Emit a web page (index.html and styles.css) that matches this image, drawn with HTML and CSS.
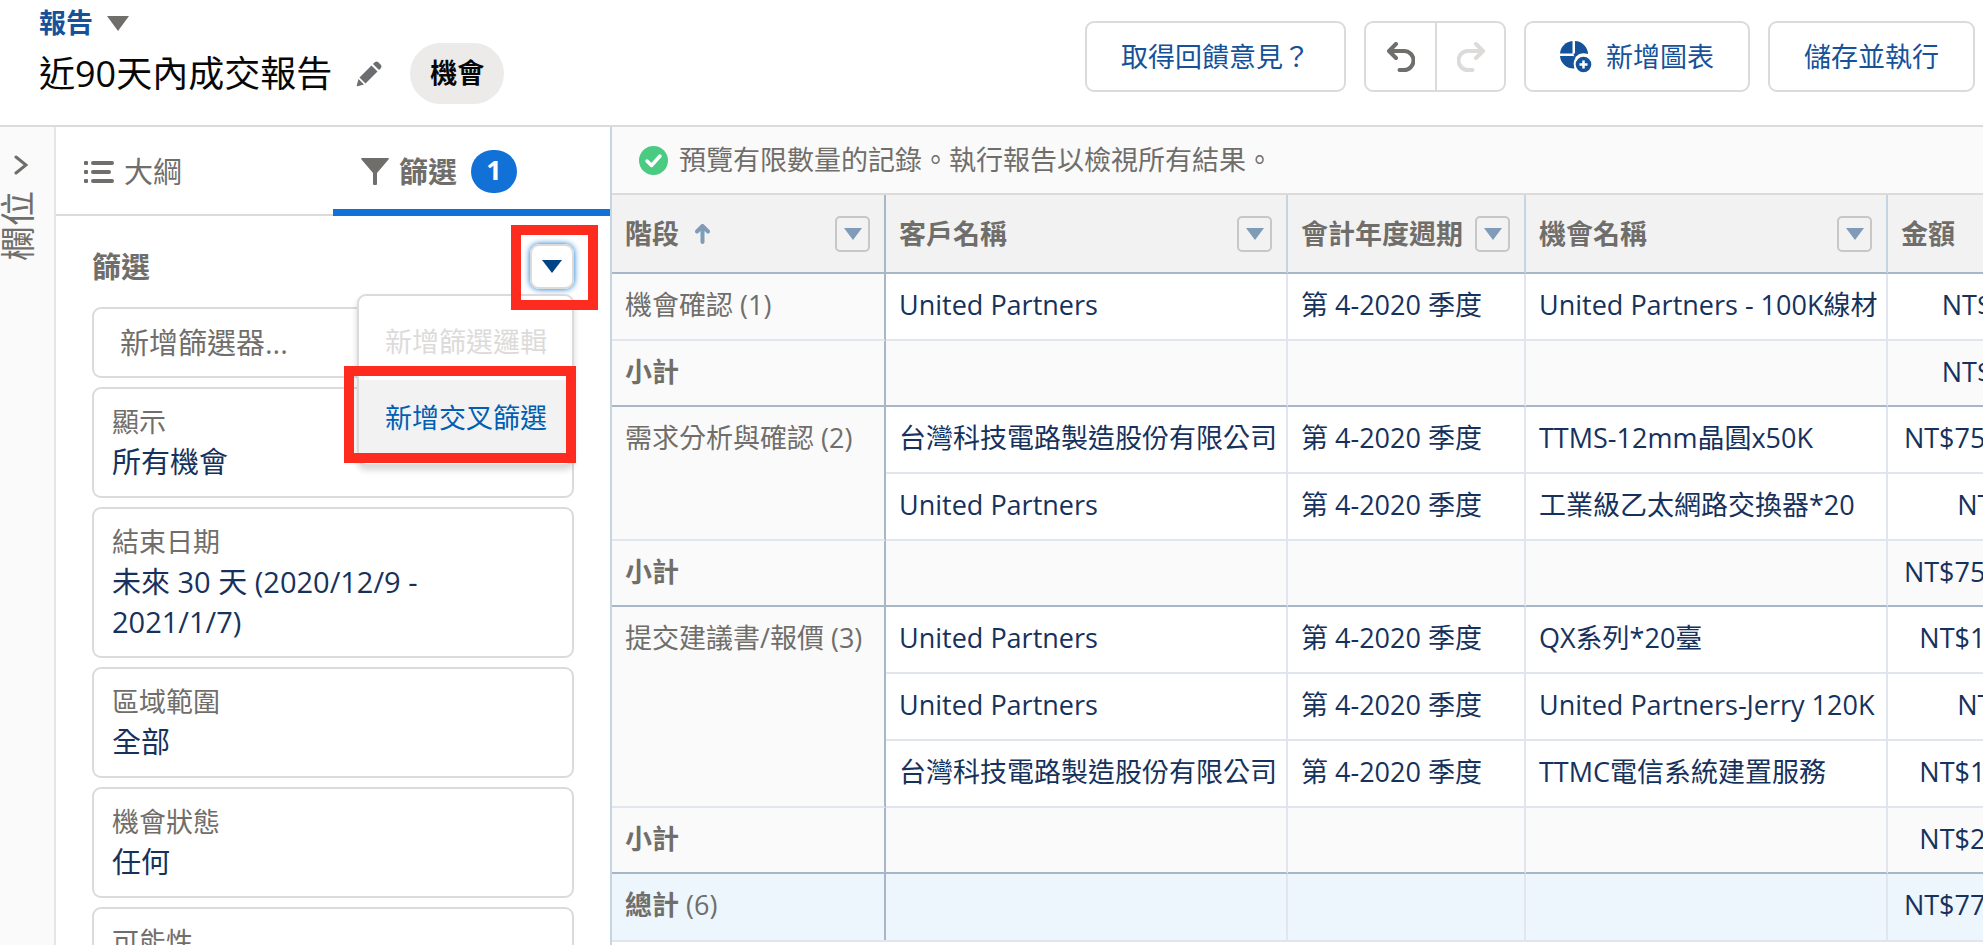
FILE: index.html
```html
<!DOCTYPE html>
<html lang="zh-Hant">

<head>
    <meta charset="UTF-8">
    <meta name="viewport" content="width=device-width, initial-scale=1.0">
    <title>近90天內成交報告</title>
    <link rel="stylesheet" href="styles.css">
</head>

<body>
    <header>
        <div class="heading">
            <a href="#" class="crumb">報告
                <svg width="22" height="15" viewBox="0 0 22 15"><path d="M0 0h22L11 15z" fill="#706e6b"/></svg>
            </a>
            <div class="title-row">
                <h1>近90天內成交報告</h1>
                <button class="edit-btn" aria-label="編輯">
                    <svg width="26" height="26" viewBox="0 0 26 26" fill="#6b6d70">
                        <path d="M3.500 16.500L15.500 4.500L21.500 10.500L9.500 22.500z"/>
                        <path d="M17 3L19 1Q20.500 0 22 1L25 4Q26 5.500 25 7L23 9z"/>
                        <path d="M2.500 18L8 23.500L1.500 25.200Q.5 25.400.8 24.300z"/>
                    </svg>
                </button>
                <span class="pill">機會</span>
            </div>
        </div>
        <div class="actions">
            <button class="btn">取得回饋意見？</button>
            <div class="btn-group">
                <button aria-label="復原">
                    <svg width="28" height="30" viewBox="0 0 28 30" fill="none" stroke="#706e6b" stroke-width="4" stroke-linecap="round" stroke-linejoin="round">
                        <path d="M9 2L2 9l7 7M2.500 9H17a9 9 0 0 1 0 19H12.500"/>
                    </svg>
                </button>
                <button aria-label="重做" disabled>
                    <svg width="28" height="30" viewBox="0 0 28 30" fill="none" stroke="#dddbda" stroke-width="4" stroke-linecap="round" stroke-linejoin="round">
                        <path d="M19 2l7 7-7 7M25.500 9H11a9 9 0 0 0 0 19h4.500"/>
                    </svg>
                </button>
            </div>
            <button class="btn">
                <svg width="32" height="32" viewBox="0 0 32 32" fill="#16529a">
                    <path d="M12.500 0V12.500H0A13.500 13.500 0 0 1 12.500 0z"/>
                    <path d="M15 0A13.500 13.500 0 0 1 28 13Q20 11 16.500 15H15z" />
                    <path d="M0 15H13.500L15.500 17Q12.500 21 14.500 27.500A13.500 13.500 0 0 1 0 15z"/>
                    <path d="M13.500 12.500h5l-4 5z"/>
                    <circle cx="23.500" cy="23.500" r="9.500" fill="#fff"/>
                    <circle cx="23.500" cy="23.500" r="7.800"/>
                    <path d="M23.500 19.500v8M19.500 23.500h8" stroke="#fff" stroke-width="2.500"/>
                </svg>
                新增圖表
            </button>
            <button class="btn">儲存並執行</button>
        </div>
    </header>

    <div class="workspace">
        <aside class="rail">
            <button aria-label="展開欄位">
                <svg width="14" height="20" viewBox="0 0 14 20" fill="none" stroke="#706e6b" stroke-width="3" stroke-linecap="round"><path d="M2 2l10 8L2 18"/></svg>
            </button>
            <span class="rail-label">欄位</span>
        </aside>

        <section class="panel">
            <nav class="tabs">
                <button class="tab">
                    <svg width="30" height="22" viewBox="0 0 30 22" fill="#706e6b">
                        <rect width="4" height="4" rx="1"/><rect y="9" width="4" height="4" rx="1"/><rect y="18" width="4" height="4" rx="1"/>
                        <rect x="7" width="23" height="4" rx="2"/><rect x="7" y="9" width="20" height="4" rx="2"/><rect x="7" y="18" width="23" height="4" rx="2"/>
                    </svg>
                    大綱
                </button>
                <button class="tab active">
                    <svg width="28" height="27" viewBox="0 0 28 27" fill="#706e6b"><path d="M1 0h26q1.500 0 .5 1.500L16 15v11q0 1-1 1h-2q-1 0-1-1V15L.5 1.500Q-.5 0 1 0z"/></svg>
                    篩選
                    <span class="badge">1</span>
                </button>
            </nav>

            <div class="filters">
                <div class="filters-head">
                    <h2>篩選</h2>
                    <div class="menu-anchor">
                        <button class="menu-btn" aria-label="篩選動作">
                            <svg width="20" height="13" viewBox="0 0 20 13"><path d="M0 0h20L10 13z" fill="#014486"/></svg>
                        </button>
                        <div class="menu">
                            <button disabled>新增篩選邏輯</button>
                            <button class="hovered">新增交叉篩選</button>
                        </div>
                        <div class="mark mark-button"></div>
                        <div class="mark mark-item"></div>
                    </div>
                </div>
                <input type="text" placeholder="新增篩選器..." aria-label="新增篩選器">
                <button class="card"><span>顯示</span><strong>所有機會</strong></button>
                <button class="card"><span>結束日期</span><strong>未來 30 天 (2020/12/9 - 2021/1/7)</strong></button>
                <button class="card"><span>區域範圍</span><strong>全部</strong></button>
                <button class="card"><span>機會狀態</span><strong>任何</strong></button>
                <button class="card"><span>可能性</span></button>
            </div>
        </section>

        <main>
            <div class="notice">
                <svg width="29" height="29" viewBox="0 0 29 29"><circle cx="14.500" cy="14.500" r="14.500" fill="#4bca81"/><path d="M8 15l4.500 4.500L21 10" fill="none" stroke="#fff" stroke-width="3.500" stroke-linecap="round" stroke-linejoin="round"/></svg>
                預覽有限數量的記錄。執行報告以檢視所有結果。
            </div>
            <table>
                <colgroup>
                    <col class="c-stage"><col class="c-account"><col class="c-period"><col class="c-name"><col class="c-amount">
                </colgroup>
                <thead>
                    <tr>
                        <th><div class="th">階段
                            <svg class="sort" width="15" height="20" viewBox="0 0 15 20" fill="none" stroke="#7f9bb8" stroke-width="4" stroke-linecap="round" stroke-linejoin="round"><path d="M7.500 18V2M2 7.500L7.500 2L13 7.500"/></svg>
                            <button aria-label="階段選單"><svg width="18" height="12" viewBox="0 0 18 12"><path d="M0 0h18L9 12z"/></svg></button></div></th>
                        <th><div class="th">客戶名稱<button aria-label="客戶名稱選單"><svg width="18" height="12" viewBox="0 0 18 12"><path d="M0 0h18L9 12z"/></svg></button></div></th>
                        <th><div class="th">會計年度週期<button aria-label="會計年度週期選單"><svg width="18" height="12" viewBox="0 0 18 12"><path d="M0 0h18L9 12z"/></svg></button></div></th>
                        <th><div class="th">機會名稱<button aria-label="機會名稱選單"><svg width="18" height="12" viewBox="0 0 18 12"><path d="M0 0h18L9 12z"/></svg></button></div></th>
                        <th><div class="th">金額</div></th>
                    </tr>
                </thead>
                <tbody>
                    <tr>
                        <td class="group">機會確認 (1)</td>
                        <td>United Partners</td>
                        <td>第 4-2020 季度</td>
                        <td>United Partners - 100K線材</td>
                        <td>NT$100,000</td>
                    </tr>
                    <tr class="subtotal"><td class="group"><b>小計</b></td><td></td><td></td><td></td><td>NT$100,000</td></tr>
                    <tr>
                        <td class="group" rowspan="2">需求分析與確認 (2)</td>
                        <td>台灣科技電路製造股份有限公司</td>
                        <td>第 4-2020 季度</td>
                        <td>TTMS-12mm晶圓x50K</td>
                        <td>NT$75,000,000</td>
                    </tr>
                    <tr>
                        <td>United Partners</td>
                        <td>第 4-2020 季度</td>
                        <td>工業級乙太網路交換器*20</td>
                        <td>NT$60,000</td>
                    </tr>
                    <tr class="subtotal"><td class="group"><b>小計</b></td><td></td><td></td><td></td><td>NT$75,060,000</td></tr>
                    <tr>
                        <td class="group" rowspan="3">提交建議書/報價 (3)</td>
                        <td>United Partners</td>
                        <td>第 4-2020 季度</td>
                        <td>QX系列*20臺</td>
                        <td>NT$1,000,000</td>
                    </tr>
                    <tr>
                        <td>United Partners</td>
                        <td>第 4-2020 季度</td>
                        <td>United Partners-Jerry 120K</td>
                        <td>NT$12,000</td>
                    </tr>
                    <tr>
                        <td>台灣科技電路製造股份有限公司</td>
                        <td>第 4-2020 季度</td>
                        <td>TTMC電信系統建置服務</td>
                        <td>NT$1,000,000</td>
                    </tr>
                    <tr class="subtotal"><td class="group"><b>小計</b></td><td></td><td></td><td></td><td>NT$2,012,000</td></tr>
                    <tr class="total"><td class="group"><b>總計</b> (6)</td><td></td><td></td><td></td><td>NT$77,172,000</td></tr>
                </tbody>
            </table>
        </main>
    </div>
</body>

</html>
```

FILE: styles.css
```css
* {
    box-sizing: border-box;
}

body {
    margin: 0;
    height: 100vh;
    display: flex;
    flex-direction: column;
    overflow: hidden;
    background-color: #fff;
    color: #16325c;
    font-family: "Open Sans", "Noto Sans CJK TC", sans-serif;
    font-size: 27px;
    line-height: 40px;
}

button,
input {
    font: inherit;
    color: inherit;
    background: none;
    border: none;
    margin: 0;
    padding: 0;
}

svg {
    display: block;
    flex: none;
}

h1,
h2 {
    margin: 0;
}

/* header */
header {
    flex: none;
    height: 127px;
    padding: 0 8px 0 39px;
    display: flex;
    justify-content: space-between;
    align-items: flex-start;
    border-bottom: 2px solid #dddbda;
}

.crumb {
    display: flex;
    align-items: center;
    gap: 14px;
    margin-top: 3px;
    color: #16529a;
    font-weight: bold;
    text-decoration: none;
}

.title-row {
    display: flex;
    align-items: center;
}

h1 {
    color: #080707;
    font-size: 36px;
    font-weight: normal;
}

.edit-btn {
    margin: 0 28px 0 24px;
}

.pill {
    height: 61px;
    padding: 10px 20px;
    border-radius: 31px;
    background-color: #ecebea;
    color: #080707;
    font-weight: bold;
}

.actions {
    display: flex;
    gap: 18px;
    margin-top: 21px;
}

.btn {
    display: flex;
    align-items: center;
    gap: 14px;
    height: 71px;
    padding: 0 34px;
    border: 2px solid #dddbda;
    border-radius: 9px;
    color: #16529a;
    white-space: nowrap;
}

.btn-group {
    display: flex;
    height: 71px;
    border: 2px solid #dddbda;
    border-radius: 9px;
}

.btn-group button {
    width: 69px;
    display: flex;
    align-items: center;
    justify-content: center;
}

.btn-group button + button {
    border-left: 2px solid #dddbda;
}

.workspace {
    flex: 1;
    min-height: 0;
    display: flex;
}

/* collapsed fields rail */
.rail {
    flex: none;
    width: 56px;
    padding-top: 28px;
    background-color: #fafafa;
    border-right: 2px solid #e5e5e5;
}

.rail button {
    display: block;
    margin: 0 0 16px 14px;
}

.rail-label {
    display: block;
    writing-mode: vertical-rl;
    text-orientation: sideways;
    transform: rotate(180deg);
    width: 36px;
    line-height: 36px;
    font-size: 35px;
    color: #706e6b;
}

/* filter panel */
.panel {
    flex: none;
    width: 554px;
    overflow: hidden;
    color: #706e6b;
    font-size: 29px;
}

.tabs {
    display: flex;
    height: 89px;
}

.tab {
    flex: 1;
    display: flex;
    align-items: center;
    gap: 10px;
    padding: 2px 28px 0;
    border-bottom: 2px solid #dddbda;
}

.tab.active {
    border-bottom: 7px solid #1271d6;
    padding-top: 7px;
    font-weight: bold;
}

.badge {
    width: 46px;
    height: 43px;
    margin-left: 4px;
    border-radius: 22px;
    background-color: #1271d6;
    color: #fff;
    font-size: 27px;
}

.filters {
    display: flex;
    flex-direction: column;
    gap: 9px;
    padding: 28px 36px 0;
}

.filters-head {
    display: flex;
    justify-content: space-between;
    align-items: center;
    margin-bottom: 9px;
}

h2 {
    font-size: 29px;
}

.menu-anchor {
    position: relative;
}

.menu-btn {
    width: 44px;
    height: 45px;
    display: flex;
    align-items: center;
    justify-content: center;
    border: 2px solid #dddbda;
    border-radius: 9px;
    box-shadow: 0 0 6px #0070d2;
}

.menu {
    position: absolute;
    top: 50px;
    right: 0;
    width: 217px;
    padding: 8px 0;
    background-color: #fff;
    border: 2px solid #dddbda;
    border-radius: 9px;
    box-shadow: 0 4px 6px rgba(0, 0, 0, 0.16);
    font-size: 27px;
}

.menu button {
    display: block;
    width: 100%;
    height: 76px;
    padding-left: 26px;
    text-align: left;
    white-space: nowrap;
    color: #dddbda;
}

.menu button.hovered {
    background-color: #f3f2f2;
    color: #005fb2;
}

/* red highlight frames */
.mark {
    position: absolute;
    border: 10px solid #fe2c1f;
    pointer-events: none;
}

.mark-button {
    top: -19px;
    right: -24px;
    width: 87px;
    height: 85px;
}

.mark-item {
    top: 122px;
    right: -2px;
    width: 232px;
    height: 97px;
}

.filters input {
    width: 100%;
    height: 71px;
    padding: 0 26px;
    border: 2px solid #dddbda;
    border-radius: 9px;
}

.filters input::placeholder {
    color: #706e6b;
    opacity: 1;
}

.card {
    padding: 13px 18px 14px;
    border: 2px solid #dddbda;
    border-radius: 9px;
    text-align: left;
}

.card span {
    display: block;
    font-size: 27px;
}

.card strong {
    display: block;
    color: #16325c;
    font-weight: normal;
}

.card:last-child {
    padding-bottom: 54px;
}

/* report */
main {
    flex: 1;
    min-width: 0;
    overflow: hidden;
    border-left: 2px solid #c5d5e4;
}

.notice {
    display: flex;
    align-items: center;
    gap: 11px;
    height: 68px;
    padding-left: 27px;
    background-color: #fafafa;
    border-bottom: 2px solid #dddbda;
    color: #706e6b;
    white-space: nowrap;
}

table {
    width: 1491px;
    table-layout: fixed;
    border-collapse: separate;
    border-spacing: 0;
    border-bottom: 2px solid #e0e5ee;
}

.c-stage {
    width: 274px;
}

.c-account {
    width: 402px;
}

.c-period {
    width: 238px;
}

.c-name {
    width: 362px;
}

.c-amount {
    width: 215px;
}

th {
    height: 79px;
    padding: 0 14px 0 13px;
    background-color: #f2f2f2;
    border-right: 2px solid #c5d5e4;
    border-bottom: 2px solid #a8b7c7;
    color: #706e6b;
    text-align: left;
}

th:first-child {
    border-right-color: #a8b7c7;
}

.th {
    display: flex;
    align-items: center;
    gap: 12px;
    white-space: nowrap;
}

.sort {
    margin-left: 4px;
}

.th button {
    display: flex;
    align-items: center;
    justify-content: center;
    width: 35px;
    height: 36px;
    margin-left: auto;
    border: 2px solid #c9c7c5;
    border-radius: 5px;
    fill: #7f9bb8;
}

td {
    height: 67px;
    padding: 11px 0 0 13px;
    vertical-align: top;
    white-space: nowrap;
    border-right: 2px solid #e0e5ee;
    border-bottom: 2px solid #e0e5ee;
}

td:last-child {
    padding-right: 9px;
    text-align: right;
}

.group {
    background-color: #fafafa;
    border-right-color: #a8b7c7;
    color: #706e6b;
}

.subtotal td {
    height: 66px;
    background-color: #fafafa;
    border-bottom-color: #a8b7c7;
}

.total td {
    height: 66px;
    background-color: #edf6fc;
    border-bottom: none;
}
```
